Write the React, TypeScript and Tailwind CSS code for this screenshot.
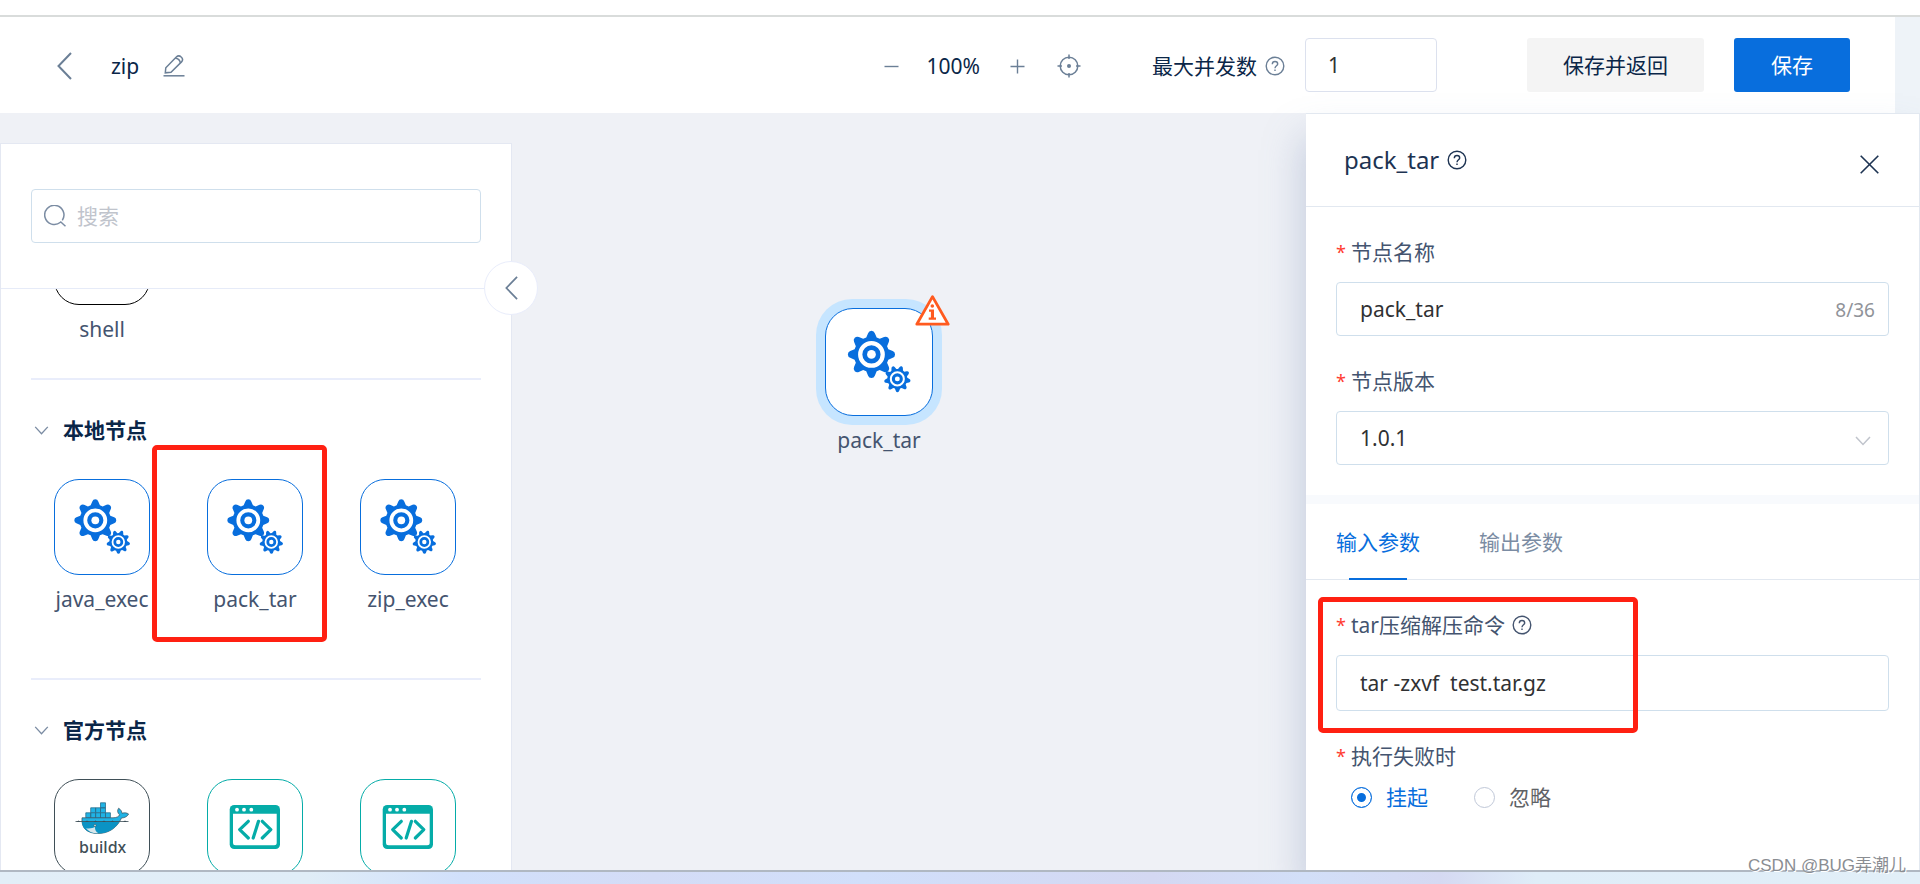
import { useState } from "react";
import type { ReactNode } from "react";

type TileKind = "gear" | "docker" | "code";

interface NodeItem {
  id: string;
  kind: TileKind;
  label?: string;
}

interface NodeGroup {
  title: string;
  items: NodeItem[];
}

const groups: NodeGroup[] = [
  {
    title: "本地节点",
    items: [
      { id: "java_exec", kind: "gear", label: "java_exec" },
      { id: "pack_tar", kind: "gear", label: "pack_tar" },
      { id: "zip_exec", kind: "gear", label: "zip_exec" },
    ],
  },
  {
    title: "官方节点",
    items: [
      { id: "buildx", kind: "docker" },
      { id: "code-1", kind: "code" },
      { id: "code-2", kind: "code" },
    ],
  },
];

/* Gear outline with rounded teeth */
function gearPath(
  cx: number,
  cy: number,
  outer: number,
  root: number,
  teeth: number,
  start: number
) {
  const step = (Math.PI * 2) / teeth;
  const at = (r: number, a: number) =>
    `${(cx + r * Math.cos(a)).toFixed(2)} ${(cy + r * Math.sin(a)).toFixed(2)}`;

  let d = "";
  for (let i = 0; i < teeth; i++) {
    const a = start + i * step;
    const tip = step * 0.14;
    d += `${i === 0 ? "M" : "L"}${at(root, a - step * 0.38)}`;
    d += `L${at(outer - (outer - root) * 0.35, a - step * 0.2)}`;
    d += `Q${at(outer, a - tip)} ${at(outer, a)}`;
    d += `Q${at(outer, a + tip)} ${at(outer - (outer - root) * 0.35, a + step * 0.2)}`;
    d += `L${at(root, a + step * 0.38)}`;
  }
  return d + "Z";
}

const bigGear = gearPath(41.3, 41.3, 21, 15.7, 8, 0);
const smallGear = gearPath(64.3, 63, 11.8, 8.9, 9, -0.54);

function GearIcon({ className }: { className: string }) {
  return (
    <svg viewBox="0 0 96 96" className={className} aria-hidden="true">
      <g fill="#086edd">
        <path d={bigGear} />
        <path d={smallGear} />
      </g>
      <circle cx="41.3" cy="41.3" r="10" fill="none" stroke="#fff" strokeWidth="3.8" />
      <circle cx="41.3" cy="41.3" r="3.9" fill="#fff" />
      <circle cx="64.3" cy="63" r="5.8" fill="none" stroke="#fff" strokeWidth="1.8" />
      <circle cx="64.3" cy="63" r="2.2" fill="#fff" />
    </svg>
  );
}

function CodeIcon({ className }: { className: string }) {
  return (
    <svg viewBox="0 0 96 96" className={className} aria-hidden="true">
      <rect x="22.7" y="26" width="50.3" height="44" rx="4.5" fill="#05aca8" />
      <path d="M26 34.7h43.7v29.1a2.5 2.5 0 0 1-2.5 2.5H28.5a2.5 2.5 0 0 1-2.5-2.5z" fill="#fff" />
      <g fill="#fff">
        <circle cx="30" cy="30.7" r="1.9" />
        <circle cx="37" cy="30.7" r="1.9" />
        <circle cx="44.3" cy="30.7" r="1.9" />
      </g>
      <path
        d="M41.3 42.3L32.7 50.6L41.3 59M51.5 42.3L46.2 59M55.3 42.3L63.8 50.6L55.3 59"
        fill="none"
        stroke="#05aca8"
        strokeWidth="3.2"
        strokeLinecap="round"
        strokeLinejoin="round"
      />
    </svg>
  );
}

function DockerIcon({ className }: { className: string }) {
  return (
    <svg viewBox="0 0 96 96" className={className} aria-hidden="true">
      <g fill="#20b3e5" stroke="#2b6f8c" strokeWidth="0.8">
        <path d="M46.5 23.8h5v5h-5zM36.7 28.8h4.9v5h-4.9zM41.6 28.8h4.9v5h-4.9zM46.5 28.8h5v5h-5z" />
        <path d="M31.8 33.8h4.9v5h-4.9zM36.7 33.8h4.9v5h-4.9zM41.6 33.8h4.9v5h-4.9zM46.5 33.8h5v5h-5zM51.5 33.8h4.9v5h-4.9z" />
      </g>
      <path
        d="M28 38.8H59C62.5 38.8 65 37.5 65.6 35.8C63.4 34 63 31.4 64.6 29.2C66.7 30.5 68 32.5 68 34.3C70.4 33.5 73 33.8 74.6 35C73.5 37.5 70.5 38.9 67.5 39C63 49 54.5 54.5 44 54.5C33 54.5 27 49 28 38.8Z"
        fill="#20b3e5"
        stroke="#3d4e57"
        strokeWidth="0.7"
      />
      <path
        d="M27.9 42.4H65.5C60.5 50.5 53 54.3 44 54.3C33.5 54.3 28.3 49.8 27.9 42.4Z"
        fill="#0b93c4"
      />
      <path d="M32 49.3C36 49.8 39 49.2 41 48C40.8 51 42 53 44.5 54.3C38.5 54.5 34.5 52.5 32 49.3Z" fill="#d7e6ea" />
      <circle cx="41" cy="46.5" r="1.1" fill="#d7e6ea" stroke="#3d4e57" strokeWidth="0.5" />
      <path d="M21.5 42.5H74.5" stroke="#3d4e57" strokeWidth="0.8" />
      <path
        d="M22.5 42.9l2-1.5 2 1.5zM31 42.9l2-1.5 2 1.5zM39.5 42.9l2-1.5 2 1.5zM48 42.9l2-1.5 2 1.5zM56.5 42.9l2-1.5 2 1.5zM69 42.9l2-1.5 2 1.5z"
        fill="#3d4e57"
      />
      <text
        x="48.7"
        y="73.5"
        textAnchor="middle"
        className="fill-[#3f4f57] text-[16px] font-medium"
      >
        buildx
      </text>
    </svg>
  );
}

function HelpIcon({ className }: { className: string }) {
  return (
    <svg
      viewBox="0 0 20 20"
      className={className}
      fill="none"
      stroke="currentColor"
      strokeWidth="1.4"
      aria-hidden="true"
    >
      <circle cx="10" cy="10" r="8.8" />
      <path d="M7.3 8.2C7.3 6.5 8.5 5.5 10 5.5S12.7 6.5 12.7 8C12.7 9.8 10 9.9 10 12.2" />
      <path d="M10 13.5v1.5" />
    </svg>
  );
}

function ChevronLeft({ className }: { className: string }) {
  return (
    <svg
      viewBox="0 0 15 28"
      className={className}
      fill="none"
      stroke="currentColor"
      strokeWidth="2"
      aria-hidden="true"
    >
      <path d="M14 1L1.5 14L14 27" />
    </svg>
  );
}

function ChevronDown({ className }: { className: string }) {
  return (
    <svg
      viewBox="0 0 16 10"
      className={className}
      fill="none"
      stroke="currentColor"
      strokeWidth="1.5"
      aria-hidden="true"
    >
      <path d="M1 1L8 8.5L15 1" />
    </svg>
  );
}

const tileBorder: Record<TileKind, string> = {
  gear: "border-[#086edd]",
  docker: "border-[#3f4f57]",
  code: "border-[#05aca8]",
};

function NodeTile({ item }: { item: NodeItem }) {
  return (
    <li className="flex w-24 flex-col items-center">
      <button
        type="button"
        aria-label={item.id}
        className={`size-24 shrink-0 rounded-[25px] border bg-white ${tileBorder[item.kind]}`}
      >
        {item.kind === "gear" && <GearIcon className="-m-px size-24" />}
        {item.kind === "docker" && <DockerIcon className="-m-px size-24" />}
        {item.kind === "code" && <CodeIcon className="-m-px size-24" />}
      </button>
      {item.label && (
        <span className="mt-2.5 whitespace-nowrap text-[#44546f]">{item.label}</span>
      )}
    </li>
  );
}

function FieldLabel({
  htmlFor,
  children,
}: {
  htmlFor?: string;
  children: ReactNode;
}) {
  return (
    <label htmlFor={htmlFor} className="flex items-center text-[#44546f]">
      <span className="w-[15px] text-lg leading-7 text-[#ff3b30]">*</span>
      {children}
    </label>
  );
}

function Header() {
  return (
    <div className="bg-[#eef3f8] pr-[25px]">
      <header className="flex h-24 items-center bg-white pr-[45px] pl-[57px] text-[#0a2648]">
        <div className="flex items-center pt-0.5">
          <button type="button" aria-label="返回">
            <ChevronLeft className="h-7 w-[15px] text-[#6b7f96]" />
          </button>
          <h1 className="ml-[39px]">zip</h1>
          <button type="button" aria-label="编辑名称" className="ml-6 text-[#6b7f96]">
            <svg
              viewBox="0 0 22 22"
              className="size-[22px]"
              fill="none"
              stroke="currentColor"
              strokeWidth="1.5"
              aria-hidden="true"
            >
              <path d="M2.3 17.8L2.8 12.8L13.3 2C14.8 .6 16.8 .7 18.2 2C19.8 3.4 19.9 5.3 18.5 6.9L8 17.3Z" />
              <path d="M12.3 3.2C15 3.4 17 5.2 17.4 7.9" />
              <path d="M.5 20.8H21.5" />
            </svg>
          </button>
        </div>

        {/* Zoom */}
        <div className="ml-auto flex items-center pt-0.5 text-[#6b7f96]">
          <button type="button" aria-label="缩小">
            <svg viewBox="0 0 15 15" className="size-[15px]" stroke="currentColor" strokeWidth="1.4" aria-hidden="true">
              <path d="M.5 7.5H14.5" />
            </svg>
          </button>
          <span className="mr-[30px] ml-7 text-[#0a2648]">100%</span>
          <button type="button" aria-label="放大">
            <svg viewBox="0 0 15 15" className="size-[15px]" stroke="currentColor" strokeWidth="1.4" aria-hidden="true">
              <path d="M.5 7.5H14.5M7.5 .5V14.5" />
            </svg>
          </button>
          <button type="button" aria-label="居中" className="ml-8">
            <svg viewBox="0 0 24 24" className="size-6" fill="none" stroke="currentColor" strokeWidth="1.5" aria-hidden="true">
              <circle cx="12" cy="12" r="8.8" />
              <path d="M12 .5V5M12 19V23.5M.5 12H5M19 12H23.5" />
              <circle cx="12" cy="12" r="2" fill="currentColor" stroke="none" />
            </svg>
          </button>
        </div>

        <label htmlFor="concurrency" className="ml-[71px] flex items-center pt-0.5">
          最大并发数
          <HelpIcon className="ml-2 size-5 text-[#6b7f96]" />
        </label>
        <input
          id="concurrency"
          defaultValue="1"
          className="ml-5 h-[54px] w-[132px] rounded-sm border border-[#dce1ee] px-[22px] text-[#303133] outline-none"
        />
        <button type="button" className="ml-[90px] h-[54px] w-[177px] rounded-[3px] bg-[#f4f4f4]">
          保存并返回
        </button>
        <button type="button" className="ml-[30px] h-[54px] w-[116px] rounded-[3px] bg-[#086edd] text-white">
          保存
        </button>
      </header>
    </div>
  );
}

function Sidebar() {
  return (
    <aside className="relative mt-[30px] flex w-lg shrink-0 flex-col border border-b-0 border-[#e4e8f2] bg-white">
      <div className="border-b border-[#e6ebf8] px-[30px] py-[45px]">
        <div className="flex h-[54px] items-center rounded-sm border border-[#cfdfec] pl-3">
          <svg
            viewBox="0 0 22 22"
            className="size-[22px] text-[#7b8ca3]"
            fill="none"
            stroke="currentColor"
            strokeWidth="1.5"
            aria-hidden="true"
          >
            <path d="M16.5 17.3A9.6 9.6 0 1 1 18.3 15.3M16.3 16.5L21.5 21.3" />
          </svg>
          <input
            aria-label="搜索"
            placeholder="搜索"
            className="ml-[11px] min-w-0 flex-1 outline-none placeholder:text-[#c0c4cc]"
          />
        </div>
      </div>

      {/* Scrolled list */}
      <div className="min-h-0 flex-1 overflow-hidden px-[30px]">
        <div className="border-b-2 border-[#e9edfb] pb-[35px] pl-[23px]">
          <div className="flex w-24 flex-col items-center">
            <div className="flex h-4 items-end overflow-hidden">
              <div className="size-24 rounded-[25px] border border-black" />
            </div>
            <span className="mt-2.5 text-[#44546f]">shell</span>
          </div>
        </div>

        {groups.map((group) => (
          <section
            key={group.title}
            className="border-b-2 border-[#e9edfb] pt-9 pb-[65px]"
          >
            <h2 className="flex items-center font-bold text-[#0a2648]">
              <ChevronDown className="mr-[14px] ml-[3px] h-[9px] w-[15px] text-[#7b8ca3]" />
              {group.title}
            </h2>
            <ul className="mt-[35px] flex gap-[57px] pl-[23px]">
              {group.items.map((item) => (
                <NodeTile key={item.id} item={item} />
              ))}
            </ul>
          </section>
        ))}
      </div>

      <button
        type="button"
        aria-label="收起"
        className="absolute top-[117px] -right-[27px] flex size-[54px] items-center justify-center rounded-full border border-[#e9edfb] bg-white"
      >
        <ChevronLeft className="h-6 w-[13px] text-[#6b7f96]" />
      </button>

      {/* Highlight */}
      <div className="pointer-events-none absolute top-[301px] left-[151px] h-[197px] w-[175px] rounded-[5px] border-5 border-[#ff2012]" />
    </aside>
  );
}

function Canvas() {
  return (
    <main className="relative min-w-0 flex-1">
      <div className="absolute top-[186px] left-[304px] flex flex-col items-center text-[#44546f]">
        <div className="relative rounded-[36px] bg-[#c6e5ff] p-[9px]">
          <div className="size-[108px] rounded-[28px] border border-[#086edd] bg-white">
            <GearIcon className="-m-px size-[108px]" />
          </div>
          <svg viewBox="0 0 35 31" className="absolute -top-1 -right-2 h-[31px] w-[35px]" aria-hidden="true">
            <path
              d="M17.5 1.6L33.2 29.2H1.8Z"
              fill="#fff"
              stroke="#ff5a1f"
              strokeWidth="2.8"
              strokeLinejoin="round"
            />
            <circle cx="17.3" cy="11" r="1.8" fill="#ff5a1f" />
            <path d="M14 14.5H19V22.6H21V24.8H13.7V22.6H15.9V16.7H14Z" fill="#ff5a1f" />
          </svg>
        </div>
        <span className="mt-px">pack_tar</span>
      </div>
    </main>
  );
}

function Drawer() {
  const [tab, setTab] = useState("in");
  const [onFail, setOnFail] = useState("hang");

  const inputClass =
    "w-full rounded-sm border border-[#cfdfec] bg-white px-[23px] text-[#303133] outline-none";

  return (
    <aside className="relative w-[614px] shrink-0 border-t border-r border-[#e2e8f0] bg-white shadow-[-4px_24px_36px_rgba(120,140,180,0.35)]">
      <div className="flex h-[93px] items-center border-b border-[#e2e8f0] pr-10 pl-[38px] text-[#1d3352]">
        <h2 className="text-2xl">pack_tar</h2>
        <HelpIcon className="ml-2 size-5" />
        <button type="button" aria-label="关闭" className="mt-2 ml-auto">
          <svg viewBox="0 0 19 19" className="size-[19px]" stroke="currentColor" strokeWidth="1.6" aria-hidden="true">
            <path d="M.7 .7L18.3 18.3M18.3 .7L.7 18.3" />
          </svg>
        </button>
      </div>

      <div className="px-[30px] pt-[31px] pb-[30px]">
        <FieldLabel htmlFor="node-name">节点名称</FieldLabel>
        <div className="relative mt-4">
          <input id="node-name" defaultValue="pack_tar" className={`h-[54px] ${inputClass}`} />
          <span className="absolute top-[14px] right-[14px] text-[19px] text-[#909399]">8/36</span>
        </div>

        <div className="mt-[31px]">
          <FieldLabel htmlFor="node-version">节点版本</FieldLabel>
        </div>
        <div className="relative mt-4">
          <select id="node-version" className={`h-[54px] appearance-none ${inputClass}`}>
            <option>1.0.1</option>
          </select>
          <ChevronDown className="pointer-events-none absolute top-[25px] right-[18px] h-2.5 w-4 text-[#c0c4cc]" />
        </div>
      </div>

      <div className="h-[9px] bg-[#f8fafd]" />

      {/* Tabs */}
      <div role="tablist" className="flex gap-[59px] border-b border-[#e2e8f0] px-[30px]">
        {[
          { id: "in", label: "输入参数" },
          { id: "out", label: "输出参数" },
        ].map((t) => (
          <button
            key={t.id}
            type="button"
            role="tab"
            aria-selected={tab === t.id}
            onClick={() => setTab(t.id)}
            className={`relative pt-6 pb-[23px] ${
              tab === t.id ? "text-[#086edd]" : "text-[#7b8ca3]"
            }`}
          >
            {t.label}
            {tab === t.id && (
              <span className="absolute inset-x-[13px] -bottom-px h-0.5 bg-[#086edd]" />
            )}
          </button>
        ))}
      </div>

      <div className="relative px-[30px] pt-[31px]">
        <FieldLabel htmlFor="tar-command">
          tar压缩解压命令
          <HelpIcon className="ml-[7px] size-5" />
        </FieldLabel>
        <input
          id="tar-command"
          defaultValue="tar -zxvf  test.tar.gz"
          className={`mt-4 block h-14 ${inputClass}`}
        />

        <fieldset className="mt-[31px]">
          <legend className="flex items-center text-[#44546f]">
            <span className="w-[15px] text-lg leading-7 text-[#ff3b30]">*</span>
            执行失败时
          </legend>
          <div className="mt-[13px] flex gap-[46px] pl-[15px]">
            {[
              { id: "hang", label: "挂起" },
              { id: "ignore", label: "忽略" },
            ].map((o) => (
              <label
                key={o.id}
                className={`flex items-center gap-[14px] ${
                  onFail === o.id ? "text-[#086edd]" : "text-[#606266]"
                }`}
              >
                <input
                  type="radio"
                  name="on-fail"
                  checked={onFail === o.id}
                  onChange={() => setOnFail(o.id)}
                  className="size-[21px] appearance-none rounded-full border border-[#c0c8d8] checked:border-[#086edd] checked:bg-[#086edd] checked:shadow-[inset_0_0_0_5px_#fff]"
                />
                {o.label}
              </label>
            ))}
          </div>
        </fieldset>

        {/* Highlight */}
        <div className="pointer-events-none absolute top-[17px] left-3 h-[136px] w-80 rounded-[5px] border-5 border-[#ff2012]" />
      </div>
    </aside>
  );
}

export default function App() {
  return (
    <div className="relative flex h-screen flex-col overflow-hidden bg-white font-['Noto_Sans','Noto_Sans_CJK_SC',sans-serif] text-[21px] leading-7">
      <div className="h-[17px] shrink-0 border-b-2 border-[#d9dcdb]" />
      <Header />
      <div className="flex min-h-0 flex-1 bg-[#eff1f6]">
        <Sidebar />
        <Canvas />
        <Drawer />
      </div>
      <footer className="relative h-[14px] shrink-0 border-t-2 border-[#b0b8c2] bg-[linear-gradient(to_right,#e2eef7_0%,#e0edf7_16%,#d1e0fb_24%,#d4dcf6_34%,#d1dffa_45%,#d4d8f2_60%,#d2dff8_68%,#d5d9f2_75%,#dfedf8_80%,#e2eff8_100%)]" />
      <p className="absolute right-[14px] bottom-1 font-['Liberation_Sans','Noto_Sans_CJK_SC',sans-serif] text-[17px] text-[#8a8d92] [text-shadow:1px_1px_0_#fff]">
        CSDN @BUG弄潮儿
      </p>
    </div>
  );
}
